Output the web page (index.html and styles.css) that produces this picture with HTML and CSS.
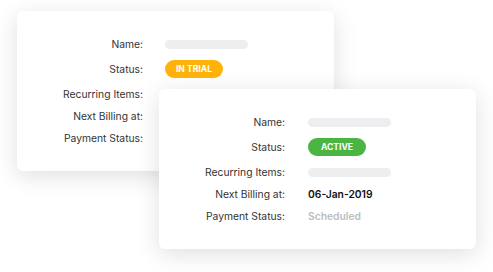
FILE: index.html
```html
<!DOCTYPE html>
<html lang="en">
<head>
<meta charset="UTF-8">
<meta name="viewport" content="width=device-width, initial-scale=1.0">
<title>Subscriptions</title>
<link rel="stylesheet" href="styles.css">
</head>
<body>

<div class="stack">
    <div class="card card-back">
        <div class="details">
            <div class="label">Name:</div>
            <div class="value"><span class="placeholder"></span></div>
            <div class="label">Status:</div>
            <div class="value"><span class="pill pill-trial">IN TRIAL</span></div>
            <div class="label">Recurring Items:</div>
            <div class="value"><span class="placeholder"></span></div>
            <div class="label">Next Billing at:</div>
            <div class="value"></div>
            <div class="label">Payment Status:</div>
            <div class="value"></div>
        </div>
    </div>

    <div class="card card-front">
        <div class="details">
            <div class="label">Name:</div>
            <div class="value"><span class="placeholder"></span></div>
            <div class="label">Status:</div>
            <div class="value"><span class="pill pill-active">ACTIVE</span></div>
            <div class="label">Recurring Items:</div>
            <div class="value"><span class="placeholder"></span></div>
            <div class="label">Next Billing at:</div>
            <div class="value date">06-Jan-2019</div>
            <div class="label">Payment Status:</div>
            <div class="value muted">Scheduled</div>
        </div>
    </div>
</div>

</body>
</html>
```

FILE: styles.css
```css
body {
    font-family: Inter, "Liberation Sans", sans-serif;
    margin: 0;
    padding: 0;
    background: #fff;
    color: #333;
}
.stack {
    display: grid;
    width: 493px;
    height: 272px;
    overflow: hidden;
}
.card {
    grid-area: 1 / 1;
    width: 317px;
    height: 160px;
    box-sizing: border-box;
    background: #fff;
    border-radius: 6px;
    box-shadow: 0 5px 24px rgba(0, 0, 0, 0.13);
    padding-top: 22px;
}
.card-back {
    margin: 11px 0 0 17px;
}
.card-front {
    margin: 89px 0 0 159px;
}
.details {
    display: grid;
    grid-template-columns: 126px auto;
    grid-template-rows: 22px 28px 22px 22px 22px;
    column-gap: 22px;
    font-size: 10.3px;
}
.card-front .details {
    column-gap: 23px;
}
.label {
    display: flex;
    align-items: center;
    justify-content: flex-end;
    color: #333;
}
.value {
    display: flex;
    align-items: center;
}
.placeholder {
    display: block;
    width: 83px;
    height: 9px;
    border-radius: 5px;
    background: #eeeef0;
}
.pill {
    display: flex;
    align-items: center;
    justify-content: center;
    width: 58px;
    height: 18px;
    border-radius: 9px;
    color: #fff;
    font-size: 8.6px;
    font-weight: 700;
}
.pill-trial {
    background: #ffb30a;
}
.pill-active {
    background: #4bb543;
}
.date {
    font-weight: 600;
    color: #111;
}
.muted {
    font-weight: 600;
    color: #bdbdc4;
}
```
